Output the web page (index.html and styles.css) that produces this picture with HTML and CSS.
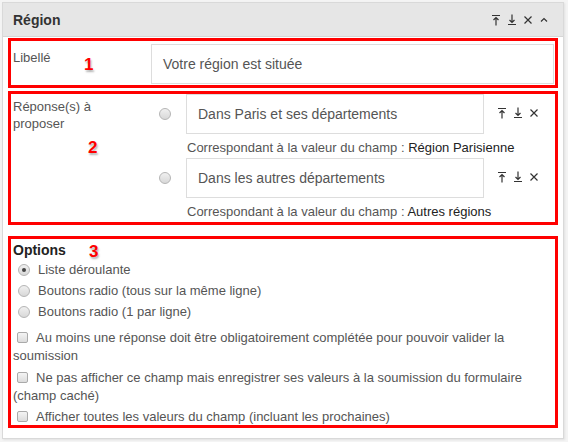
FILE: index.html
```html
<!DOCTYPE html>
<html lang="fr">
<head>
    <meta charset="UTF-8">
    <meta name="viewport" content="width=device-width, initial-scale=1.0">
    <title>Région</title>
    <link rel="stylesheet" href="styles.css">
</head>
<body>
    <div class="panel">
        <div class="panel-head">
            <span class="panel-title">Région</span>
            <div class="tools">
                <svg class="ico" viewBox="0 0 10 12"><path d="M1 1.5h8M5 3.5v8M2.5 6l2.5-2.5 2.5 2.5"/></svg>
                <svg class="ico" viewBox="0 0 10 12"><path d="M1 10.5h8M5 0.5v8M2.5 6l2.5 2.5 2.5-2.5"/></svg>
                <svg class="ico" viewBox="0 0 10 12"><path d="M1.5 2.5l7 7M8.5 2.5l-7 7"/></svg>
                <svg class="ico" viewBox="0 0 10 12"><path d="M2 7.5l3-3 3 3"/></svg>
            </div>
        </div>

        <div class="panel-body">
            <div class="box row-label">
                <span class="field-label">Libellé</span>
                <div class="field-input">Votre région est située</div>
                <span class="mark mark-1">1</span>
            </div>

            <div class="box answers">
                <span class="field-label">Réponse(s) à<br>proposer</span>
                <div class="answer-list">
                    <div class="answer">
                        <span class="radio"></span>
                        <div class="answer-main">
                            <div class="field-input">Dans Paris et ses départements</div>
                            <p class="hint">Correspondant à la valeur du champ : <span class="hint-val">Région Parisienne</span></p>
                        </div>
                        <div class="tools row-tools">
                            <svg class="ico" viewBox="0 0 10 12"><path d="M1 1.5h8M5 3.5v8M2.5 6l2.5-2.5 2.5 2.5"/></svg>
                            <svg class="ico" viewBox="0 0 10 12"><path d="M1 10.5h8M5 0.5v8M2.5 6l2.5 2.5 2.5-2.5"/></svg>
                            <svg class="ico" viewBox="0 0 10 12"><path d="M1.5 2.5l7 7M8.5 2.5l-7 7"/></svg>
                        </div>
                    </div>
                    <div class="answer">
                        <span class="radio"></span>
                        <div class="answer-main">
                            <div class="field-input">Dans les autres départements</div>
                            <p class="hint">Correspondant à la valeur du champ : <span class="hint-val">Autres régions</span></p>
                        </div>
                        <div class="tools row-tools">
                            <svg class="ico" viewBox="0 0 10 12"><path d="M1 1.5h8M5 3.5v8M2.5 6l2.5-2.5 2.5 2.5"/></svg>
                            <svg class="ico" viewBox="0 0 10 12"><path d="M1 10.5h8M5 0.5v8M2.5 6l2.5 2.5 2.5-2.5"/></svg>
                            <svg class="ico" viewBox="0 0 10 12"><path d="M1.5 2.5l7 7M8.5 2.5l-7 7"/></svg>
                        </div>
                    </div>
                </div>
                <span class="mark mark-2">2</span>
            </div>

            <div class="box options">
                <div class="opt-title">Options</div>
                <span class="mark mark-3">3</span>
                <ul class="radio-list">
                    <li><span class="radio checked"></span>Liste déroulante</li>
                    <li><span class="radio"></span>Boutons radio (tous sur la même ligne)</li>
                    <li><span class="radio"></span>Boutons radio (1 par ligne)</li>
                </ul>
                <p class="check-row"><span class="check"></span>Au moins une réponse doit être obligatoirement complétée pour pouvoir valider la soumission</p>
                <p class="check-row"><span class="check"></span>Ne pas afficher ce champ mais enregistrer ses valeurs à la soumission du formulaire (champ caché)</p>
                <p class="check-row"><span class="check"></span>Afficher toutes les valeurs du champ (incluant les prochaines)</p>
            </div>
        </div>
    </div>
</body>
</html>
```

FILE: styles.css
```css
body {
    margin: 0;
    padding: 2px;
    background-color: #f4f4f4;
    font-family: "Liberation Sans", Arial, sans-serif;
    color: #555;
}

.panel {
    width: 560px;
    background-color: #fff;
    border: 1px solid #d9d9d9;
    box-shadow: 1px 1px 2px rgba(0, 0, 0, 0.08);
}

.panel-head {
    height: 33px;
    background-color: #e6e6e6;
    border-bottom: 1px solid #d6d6d6;
    display: flex;
    align-items: center;
    justify-content: space-between;
    padding: 0 14px 0 10px;
}

.panel-title {
    font-size: 14px;
    font-weight: bold;
    color: #333;
}

.tools {
    display: flex;
    gap: 6px;
}

.ico {
    width: 10px;
    height: 12px;
    fill: none;
    stroke: #333;
    stroke-width: 1.2;
}

.panel-body {
    padding: 1px 5px 10px;
}

.box {
    border: 3px solid #f00;
    position: relative;
}

.row-label {
    display: flex;
    padding: 3px 1px 1px 0;
    margin-bottom: 3px;
}

.field-label {
    width: 140px;
    flex-shrink: 0;
    font-size: 13px;
    line-height: 17px;
    padding: 5px 0 0 2px;
    box-sizing: border-box;
}

.field-input {
    flex: 1;
    height: 40px;
    box-sizing: border-box;
    border: 1px solid #ddd;
    padding: 0 11px;
    font-size: 14px;
    line-height: 38px;
    color: #555;
}

.mark {
    position: absolute;
    color: #f00;
    font-weight: bold;
    font-size: 17px;
    text-shadow: 1px 2px 2px rgba(0, 0, 0, 0.3);
}

.mark-1 { left: 73px; top: 14px; }
.mark-2 { left: 77px; top: 44px; }
.mark-3 { left: 78px; top: 3px; }

.answers {
    display: flex;
    padding-right: 1px;
    margin-bottom: 11px;
}

.answers .field-label {
    padding-top: 4px;
}

.answer-list {
    flex: 1;
}

.answer {
    display: flex;
    align-items: flex-start;
}

.answer .radio {
    margin: 14px 15px 0 8px;
}

.answer-main {
    width: 298px;
}

.answer-main .field-input {
    width: 100%;
}

.hint {
    margin: 0;
    font-size: 13px;
    line-height: 17px;
    padding: 5px 0 2px 1px;
    white-space: nowrap;
}

.hint-val {
    color: #222;
}

.row-tools {
    margin: 13px 0 0 13px;
    gap: 6px;
}

.radio {
    display: inline-block;
    width: 12px;
    height: 12px;
    box-sizing: border-box;
    border-radius: 50%;
    border: 1px solid #b5b5b5;
    background: linear-gradient(#f0f0f0, #d8d8d8);
    flex-shrink: 0;
    position: relative;
}

.radio.checked::after {
    content: "";
    position: absolute;
    left: 3px;
    top: 3px;
    width: 4px;
    height: 4px;
    border-radius: 50%;
    background-color: #444;
}

.options {
    padding: 2px 2px 0;
}

.opt-title {
    font-size: 14px;
    font-weight: bold;
    color: #222;
    line-height: 18px;
}

.radio-list {
    list-style: none;
    margin: 0;
    padding: 0 0 3px 5px;
}

.radio-list li {
    display: flex;
    align-items: center;
    gap: 8px;
    font-size: 13px;
    height: 21px;
}

.check-row {
    margin: 4px 0 0;
    font-size: 13px;
    line-height: 18px;
}

.check-row:last-child {
    line-height: 16px;
}

.check {
    display: inline-block;
    width: 11px;
    height: 11px;
    box-sizing: border-box;
    border: 1px solid #aaa;
    border-radius: 2px;
    background: linear-gradient(#f4f4f4, #dcdcdc);
    margin: 0 8px 0 4px;
    vertical-align: -1px;
}
```
